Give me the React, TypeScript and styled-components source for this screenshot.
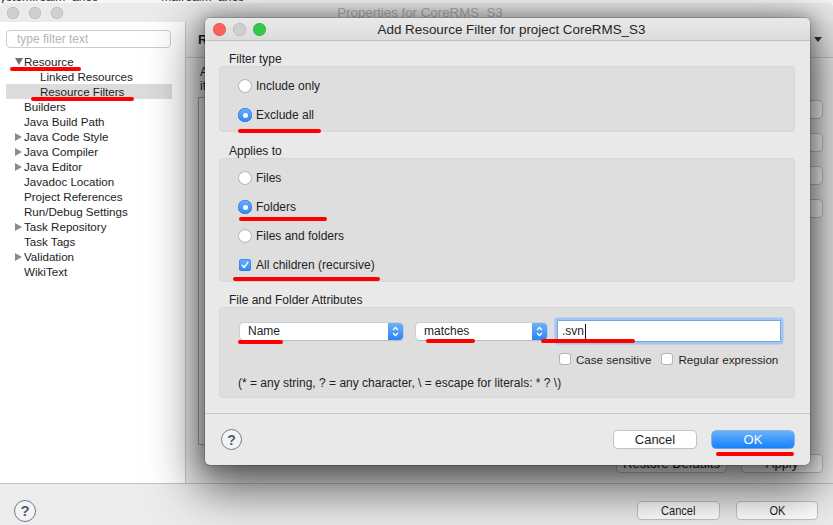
import React from "react";
import styled, { createGlobalStyle, css } from "styled-components";

const Global = createGlobalStyle`
  html, body { margin: 0; padding: 0; }
  body {
    width: 833px; height: 525px; overflow: hidden;
    font-family: "Liberation Sans", Arial, sans-serif;
    font-size: 12px; color: #1e1e1e; background: #fff;
  }
  * { box-sizing: border-box; }
`;

const Screen = styled.div`
  position: relative;
  width: 833px;
  height: 525px;
  overflow: hidden;
  display: flex;
  flex-direction: column;
  background: #fafafa;
`;

const TopStrip = styled.div`
  height: 3px;
  overflow: hidden;
  background: #f6f6f6;
  white-space: nowrap;
  font-size: 12px;
  line-height: 12px;
  color: #333;
`;

const StripText = styled.div`
  margin-top: -9px;
  word-spacing: 60px;
`;

const Window = styled.div`
  flex: 1;
  display: flex;
  flex-direction: column;
  background: #ececec;
  border-radius: 5px 5px 0 0;
  overflow: hidden;
`;

const TitleBar = styled.div`
  height: 19px;
  display: grid;
  grid-template-columns: 1fr auto 1fr;
  align-items: center;
  background: #ebebeb;
  padding-left: 7px;
`;

const Lights = styled.div`
  display: flex;
  gap: ${(p: { gap: number }) => p.gap}px;
  align-items: center;
`;

const Light = styled.span<{ color: string; size: number }>`
  width: ${(p) => p.size}px;
  height: ${(p) => p.size}px;
  border-radius: 50%;
  background: ${(p) => p.color};
  box-shadow: inset 0 0 0 0.5px rgba(0, 0, 0, 0.18);
`;

const WinTitle = styled.div`
  font-size: 13.3px;
  color: #b3b3b3;
`;

const Main = styled.div`
  flex: 1;
  display: flex;
  min-height: 0;
`;

const Sidebar = styled.div`
  width: 186px;
  background: #fff;
  border-right: 1px solid #c8c8c8;
  padding: 8px 0 0 6px;
`;

const FilterBox = styled.div`
  width: 165px;
  height: 18px;
  border: 1px solid #cdcdcd;
  border-radius: 4px;
  padding-left: 10px;
  display: flex;
  align-items: center;
  color: #b4b4b4;
  font-size: 12px;
`;

const Tree = styled.div`
  margin-top: 6px;
  width: 166px;
  font-size: 11.6px;
`;

const Row = styled.div<{ level: number; selected?: boolean }>`
  height: 15px;
  display: flex;
  align-items: center;
  padding-left: ${(p) => 9 + p.level * 16}px;
  background: ${(p) => (p.selected ? "#dcdcdc" : "transparent")};
  color: #1c1c1c;
  white-space: nowrap;
`;

const Twisty = styled.span<{ open?: boolean; show?: boolean }>`
  width: 9px;
  height: 9px;
  flex: none;
  display: flex;
  align-items: center;
  &::before {
    content: "";
    display: ${(p) => (p.show ? "block" : "none")};
    ${(p) =>
      p.open
        ? css`
            border-left: 4px solid transparent;
            border-right: 4px solid transparent;
            border-top: 7px solid #707070;
          `
        : css`
            border-top: 4px solid transparent;
            border-bottom: 4px solid transparent;
            border-left: 7px solid #8c8c8c;
          `}
  }
`;

const Content = styled.div`
  flex: 1;
  display: flex;
  flex-direction: column;
  min-width: 0;
`;

const PageHeader = styled.div`
  height: 36px;
  border-bottom: 1px solid #c6c6c6;
  display: flex;
  align-items: center;
  padding: 0 11px 0 12px;
  font-weight: bold;
  font-size: 13px;
  background: #e9e9e9;
`;

const Spacer = styled.div`
  flex: 1;
`;

const DownArrow = styled.span`
  border-left: 4px solid transparent;
  border-right: 4px solid transparent;
  border-top: 5px solid #35304a;
`;

const Desc = styled.div`
  margin-top: 7px;
  padding-left: 14px;
  line-height: 14px;
  white-space: nowrap;
`;

const PageBody = styled.div`
  flex: 1;
  margin-top: 4px;
  display: flex;
  gap: 10px;
  padding: 0 11px 0 12px;
`;

const TableBox = styled.div`
  flex: 1;
  border: 1px solid #a9a9a9;
  background: #f2f2f2;
`;

const SideButtons = styled.div`
  width: 112px;
  display: flex;
  flex-direction: column;
  gap: 16px;
  padding-top: 4px;
`;

const PageFooter = styled.div`
  display: flex;
  justify-content: flex-end;
  gap: 16px;
  padding: 10px 11px 11px 0;
`;

const MacButton = styled.div<{ w: number; primary?: boolean; condensed?: boolean }>`
  width: ${(p) => p.w}px;
  height: 17px;
  flex: none;
  border-radius: 4px;
  display: flex;
  align-items: center;
  justify-content: center;
  font-size: 13px;
  white-space: nowrap;
  ${(p) =>
    p.primary
      ? css`
          background: linear-gradient(#6ab2fb, #1581fb);
          color: #fff;
          box-shadow: 0 0 0 0.5px #2b7fe6, 0 1px 1px rgba(0, 0, 0, 0.15);
        `
      : css`
          background: #fff;
          color: #1e1e1e;
          box-shadow: 0 0 0 1px #c4c4c4, 0 1px 1px rgba(0, 0, 0, 0.12);
        `}
  ${(p) =>
    p.condensed &&
    css`
      & > span {
        display: inline-block;
        transform: scaleX(0.85);
      }
    `}
`;

const BottomBar = styled.div`
  height: 42px;
  border-top: 1px solid #c2c2c2;
  display: flex;
  align-items: center;
  padding: 12px 16px 0 14px;
  gap: 18px;
  background: #ececec;
`;

const HelpIcon = styled.span<{ size: number }>`
  width: ${(p) => p.size}px;
  height: ${(p) => p.size}px;
  flex: none;
  border-radius: 50%;
  border: 1.5px solid #6e7c8e;
  color: #4f5e73;
  display: flex;
  align-items: center;
  justify-content: center;
  font-weight: bold;
  font-size: ${(p) => p.size - 7}px;
  background: #f4f4f4;
`;

/* Dialog */

const Dialog = styled.div`
  position: absolute;
  left: 205px;
  top: 18px;
  width: 605px;
  height: 447px;
  border-radius: 5px;
  background: #e9e9e9;
  display: flex;
  flex-direction: column;
  overflow: hidden;
  box-shadow: 0 0 0 0.5px rgba(0, 0, 0, 0.3), 0 0 14px 4px rgba(0, 0, 0, 0.18),
    0 16px 48px 8px rgba(0, 0, 0, 0.62);
`;

const DialogTitleBar = styled.div`
  height: 23px;
  flex: none;
  border-bottom: 1px solid #c2c2c2;
  background: linear-gradient(#e9e9e9, #dcdcdc);
  display: grid;
  grid-template-columns: 1fr auto 1fr;
  align-items: center;
  padding-left: 8px;
`;

const DialogTitle = styled.div`
  font-size: 13.4px;
  color: #262626;
`;

const DialogBody = styled.div`
  flex: 1;
  padding: 0 15px 0 14px;
  display: flex;
  flex-direction: column;
`;

const GroupLabel = styled.div`
  margin-top: ${(p: { top: number }) => p.top}px;
  height: 14px;
  line-height: 14px;
  padding-left: 10px;
  color: #222;
`;

const Group = styled.div<{ pt: number; pb: number; gap: number }>`
  background: #dedede;
  border: 1px solid #d6d6d6;
  border-radius: 4px;
  padding: ${(p) => p.pt}px 14px ${(p) => p.pb}px 18px;
  display: flex;
  flex-direction: column;
  gap: ${(p) => p.gap}px;
`;

const OptionRow = styled.div`
  height: 16px;
  display: flex;
  align-items: center;
  gap: 4px;
  color: #222;
`;

const Radio = styled.span<{ checked?: boolean }>`
  width: 14px;
  height: 14px;
  flex: none;
  border-radius: 50%;
  display: flex;
  align-items: center;
  justify-content: center;
  ${(p) =>
    p.checked
      ? css`
          background: linear-gradient(#69affc, #2d86f6);
          box-shadow: inset 0 0 0 0.5px #2a76d8;
          &::after {
            content: "";
            width: 5px;
            height: 5px;
            border-radius: 50%;
            background: #fff;
          }
        `
      : css`
          background: #fff;
          box-shadow: inset 0 0 0 1px #b4b4b4;
        `}
`;

const Check = styled.span<{ checked?: boolean }>`
  width: 12px;
  height: 12px;
  flex: none;
  border-radius: 3px;
  margin: 0 1px;
  display: flex;
  align-items: center;
  justify-content: center;
  ${(p) =>
    p.checked
      ? css`
          background: linear-gradient(#69affc, #2d86f6);
          box-shadow: inset 0 0 0 0.5px #2a76d8;
        `
      : css`
          background: #fff;
          box-shadow: inset 0 0 0 1px #b4b4b4;
        `}
`;

const AttrGroup = styled.div`
  background: #dedede;
  border: 1px solid #d6d6d6;
  border-radius: 4px;
  padding: 11px 13px 7px 19px;
  display: flex;
  flex-direction: column;
`;

const AttrRow = styled.div`
  height: 24px;
  display: flex;
  align-items: center;
`;

const Select = styled.div<{ w: number; ml: number }>`
  width: ${(p) => p.w}px;
  margin-left: ${(p) => p.ml}px;
  height: 17px;
  flex: none;
  border-radius: 4px;
  background: #fff;
  box-shadow: 0 0 0 0.5px #bcbcbc, 0 1px 1px rgba(0, 0, 0, 0.15);
  display: flex;
  align-items: center;
  padding-left: 8px;
  color: #1e1e1e;
  overflow: hidden;
`;

const SelectText = styled.span`
  flex: 1;
`;

const Stepper = styled.span`
  width: 15px;
  height: 17px;
  flex: none;
  background: linear-gradient(#6cb1fb, #2a85f7);
  display: flex;
  align-items: center;
  justify-content: center;
`;

const TextInput = styled.div`
  margin-left: 10px;
  width: 224px;
  height: 22px;
  flex: none;
  background: #fff;
  border: 1px solid #79a6e2;
  box-shadow: 0 0 0 2.5px #a3c5f1;
  border-radius: 1px;
  display: flex;
  align-items: center;
  padding-left: 4px;
  color: #1e1e1e;
`;

const Caret = styled.span`
  width: 1px;
  height: 15px;
  background: #111;
  margin-left: 1px;
`;

const CheckRow = styled.div`
  margin-top: 9px;
  height: 14px;
  display: flex;
  align-items: center;
  padding-left: 319px;
  gap: 4px;
  white-space: nowrap;
  font-size: 11.6px;
`;

const CheckGap = styled.span`
  width: 1px;
  flex: none;
`;

const Hint = styled.div`
  margin-top: 10px;
  height: 14px;
  line-height: 14px;
  margin-left: -1px;
  color: #222;
  white-space: nowrap;
`;

const DialogButtons = styled.div`
  height: 52px;
  flex: none;
  border-top: 1px solid #c8c8c8;
  display: flex;
  align-items: center;
  padding: 0 16px 0 16px;
  gap: 16px;
`;

const Mark = styled.div`
  position: absolute;
  height: 4px;
  border-radius: 2px;
  background: #fe0000;
`;

const Chevrons = () => (
  <svg width="9" height="11" viewBox="0 0 9 11">
    <path d="M2 4 L4.5 1.5 L7 4 M2 7 L4.5 9.5 L7 7" fill="none" stroke="#fff" strokeWidth="1.3" />
  </svg>
);

const Tick = () => (
  <svg width="10" height="10" viewBox="0 0 10 10">
    <path d="M2.2 5.3 L4.2 7.4 L7.8 2.4" fill="none" stroke="#fff" strokeWidth="1.6" strokeLinecap="round" strokeLinejoin="round" />
  </svg>
);

const tree: { label: string; level: number; twisty?: "open" | "closed"; selected?: boolean }[] = [
  { label: "Resource", level: 0, twisty: "open" },
  { label: "Linked Resources", level: 1 },
  { label: "Resource Filters", level: 1, selected: true },
  { label: "Builders", level: 0 },
  { label: "Java Build Path", level: 0 },
  { label: "Java Code Style", level: 0, twisty: "closed" },
  { label: "Java Compiler", level: 0, twisty: "closed" },
  { label: "Java Editor", level: 0, twisty: "closed" },
  { label: "Javadoc Location", level: 0 },
  { label: "Project References", level: 0 },
  { label: "Run/Debug Settings", level: 0 },
  { label: "Task Repository", level: 0, twisty: "closed" },
  { label: "Task Tags", level: 0 },
  { label: "Validation", level: 0, twisty: "closed" },
  { label: "WikiText", level: 0 },
];

const marks = [
  { x: 10, y: 67, w: 71 },
  { x: 31, y: 97, w: 103 },
  { x: 238, y: 129, w: 83 },
  { x: 239, y: 217, w: 88 },
  { x: 233, y: 277, w: 147 },
  { x: 238, y: 340, w: 45 },
  { x: 426, y: 339, w: 49 },
  { x: 541, y: 339, w: 94 },
  { x: 716, y: 452, w: 78 },
];

export default function App() {
  return (
    <>
      <Global />
      <Screen>
        <TopStrip>
          <StripText>ystem.realm_aries ma.realm_aries</StripText>
        </TopStrip>
        <Window>
          <TitleBar>
            <Lights gap={10}>
              <Light color="#d0d0d0" size={12} />
              <Light color="#d0d0d0" size={12} />
              <Light color="#d0d0d0" size={12} />
            </Lights>
            <WinTitle>Properties for CoreRMS_S3</WinTitle>
            <div />
          </TitleBar>
          <Main>
            <Sidebar>
              <FilterBox>type filter text</FilterBox>
              <Tree>
                {tree.map((t) => (
                  <Row key={t.label} level={t.level} selected={t.selected}>
                    <Twisty show={!!t.twisty} open={t.twisty === "open"} />
                    {t.label}
                  </Row>
                ))}
              </Tree>
            </Sidebar>
            <Content>
              <PageHeader>
                Resource Filters
                <Spacer />
                <DownArrow />
              </PageHeader>
              <Desc>
                Add filters
                <br />
                items
              </Desc>
              <PageBody>
                <TableBox />
                <SideButtons>
                  <MacButton w={112}>Add Filter...</MacButton>
                  <MacButton w={112}>Add Group...</MacButton>
                  <MacButton w={112}>Edit...</MacButton>
                  <MacButton w={112}>Remove</MacButton>
                </SideButtons>
              </PageBody>
              <PageFooter>
                <MacButton w={109}>Restore Defaults</MacButton>
                <MacButton w={80}>Apply</MacButton>
              </PageFooter>
            </Content>
          </Main>
          <BottomBar>
            <HelpIcon size={22}>?</HelpIcon>
            <Spacer />
            <MacButton w={81} condensed>
              <span>Cancel</span>
            </MacButton>
            <MacButton w={80} condensed>
              <span>OK</span>
            </MacButton>
          </BottomBar>
        </Window>

        <Dialog>
          <DialogTitleBar>
            <Lights gap={7}>
              <Light color="#fc605c" size={13} />
              <Light color="#cfcfcf" size={13} />
              <Light color="#34c84a" size={13} />
            </Lights>
            <DialogTitle>Add Resource Filter for project CoreRMS_S3</DialogTitle>
            <div />
          </DialogTitleBar>
          <DialogBody>
            <GroupLabel top={11}>Filter type</GroupLabel>
            <Group pt={11} pb={8} gap={13}>
              <OptionRow>
                <Radio />
                Include only
              </OptionRow>
              <OptionRow>
                <Radio checked />
                Exclude all
              </OptionRow>
            </Group>
            <GroupLabel top={12}>Applies to</GroupLabel>
            <Group pt={11} pb={8} gap={13}>
              <OptionRow>
                <Radio />
                Files
              </OptionRow>
              <OptionRow>
                <Radio checked />
                Folders
              </OptionRow>
              <OptionRow>
                <Radio />
                Files and folders
              </OptionRow>
              <OptionRow>
                <Check checked>
                  <Tick />
                </Check>
                All children (recursive)
              </OptionRow>
            </Group>
            <GroupLabel top={11}>File and Folder Attributes</GroupLabel>
            <AttrGroup>
              <AttrRow>
                <Select w={163} ml={1}>
                  <SelectText>Name</SelectText>
                  <Stepper>
                    <Chevrons />
                  </Stepper>
                </Select>
                <Select w={131} ml={13}>
                  <SelectText>matches</SelectText>
                  <Stepper>
                    <Chevrons />
                  </Stepper>
                </Select>
                <TextInput>
                  .svn
                  <Caret />
                </TextInput>
              </AttrRow>
              <CheckRow>
                <Check />
                Case sensitive
                <CheckGap />
                <Check />
                Regular expression
              </CheckRow>
              <Hint>(* = any string, ? = any character, \ = escape for literals: * ? \)</Hint>
            </AttrGroup>
          </DialogBody>
          <DialogButtons>
            <HelpIcon size={21}>?</HelpIcon>
            <Spacer />
            <MacButton w={82}>Cancel</MacButton>
            <MacButton w={82} primary>
              OK
            </MacButton>
          </DialogButtons>
        </Dialog>

        {marks.map((m, i) => (
          <Mark key={i} style={{ left: m.x, top: m.y, width: m.w }} />
        ))}
      </Screen>
    </>
  );
}
